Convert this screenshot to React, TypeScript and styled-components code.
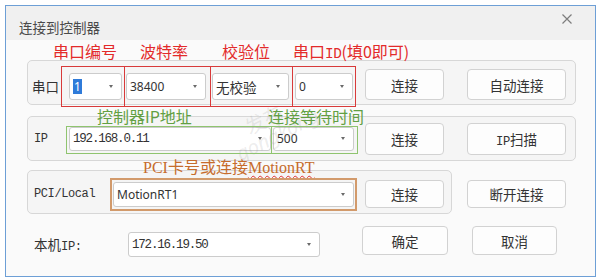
import React from 'react';
import styled, { createGlobalStyle } from 'styled-components';

const CJK = `"Noto Sans CJK SC", "Noto Sans", sans-serif`;
const SONG = `"Liberation Mono", "Noto Sans CJK SC", monospace`;
const SANS = `"Noto Sans", "Noto Sans CJK SC", sans-serif`;

const GlobalStyle = createGlobalStyle`
    html, body {
        margin:0;
        background:#ffffff;
    }
    body {
        font-family:${CJK};
    }
`

type Font = 'cjk' | 'song' | 'sans';
const fontOf = (f?: Font) => (f === 'song' ? SONG : f === 'sans' ? SANS : CJK);

const App = () => {
    return (
        <>
            <GlobalStyle />
            <Window>
                <TitleBar>
                    <Title>连接到控制器</Title>
                    <Close width="10" height="10" viewBox="0 0 10 10">
                        <path d="M0.5 0.5 L9.5 9.5 M9.5 0.5 L0.5 9.5" stroke="#7d7d7d" strokeWidth="1.2" />
                    </Close>
                </TitleBar>
                <Body>
                    <Group $w={549} $h={45} $align="flex-end" $pb={4}>
                        <RowLabel $w={27} $h={27} $ml={4}>串口</RowLabel>
                        <Combo $w={53} $h={27} $ml={10}>
                            <Selected>1</Selected>
                            <Arrow />
                        </Combo>
                        <Combo $w={80} $h={27} $ml={4} $font="sans">38400<Arrow /></Combo>
                        <Combo $w={77} $h={27} $ml={6}>无校验<Arrow /></Combo>
                        <Combo $w={58} $h={27} $ml={6} $font="sans">0<Arrow /></Combo>
                        <Button $w={79} $h={31} $ml={12}>连接</Button>
                        <Button $w={99} $h={31} $ml={23}>自动连接</Button>
                    </Group>

                    <Group $w={549} $h={45} $mt={11}>
                        <RowLabel $w={35} $h={24} $ml={6} $font="song">IP</RowLabel>
                        <Combo $w={202} $h={24} $font="song">192.168.0.11<Arrow /></Combo>
                        <Combo $w={81} $h={24} $ml={2} $font="sans">500<Arrow /></Combo>
                        <Button $w={79} $h={32} $ml={11}>连接</Button>
                        <Button $w={99} $h={32} $ml={23}><Song>IP</Song>扫描</Button>
                    </Group>

                    <Row $mt={9}>
                        <Group $w={425} $h={44} $pt={4}>
                            <RowLabel $w={79} $h={25} $ml={6} $font="song">PCI/Local</RowLabel>
                            <Combo $w={241} $h={25} $font="sans">MotionRT1<Arrow /></Combo>
                            <Button $w={79} $h={28} $ml={11}>连接</Button>
                        </Group>
                        <Button $w={99} $h={28} $ml={15} $mt={10}>断开连接</Button>
                    </Row>

                    <Row $mt={12}>
                        <RowLabel $w={94} $h={25} $ml={7} $mt={6}>本机<Song>IP:</Song></RowLabel>
                        <Combo $w={192} $h={25} $mt={6} $font="song">172.16.19.50<Arrow /></Combo>
                        <Button $w={86} $h={29} $ml={42}>确定</Button>
                        <Button $w={85} $h={29} $ml={24}>取消</Button>
                    </Row>

                    <Watermark>
                        <span>发布</span>
                        <span>gongkong</span>
                    </Watermark>

                    <Note $x={47} $y={1} $c="#e32a2a">串口编号</Note>
                    <Note $x={134} $y={1} $c="#e32a2a">波特率</Note>
                    <Note $x={216} $y={1} $c="#e32a2a">校验位</Note>
                    <Note $x={287} $y={1} $c="#e32a2a">串口<Song>ID</Song>(填0即可)</Note>
                    <Frame $x={55} $y={26} $w={64} $h={41} $c="#d83a3a" />
                    <Frame $x={118} $y={26} $w={87} $h={41} $c="#d83a3a" />
                    <Frame $x={204} $y={26} $w={83} $h={41} $c="#d83a3a" />
                    <Frame $x={286} $y={26} $w={64} $h={41} $c="#d83a3a" />

                    <Note $x={91} $y={66} $c="#62a043">控制器IP地址</Note>
                    <Note $x={262} $y={66} $c="#62a043">连接等待时间</Note>
                    <Frame $x={60} $y={86} $w={206} $h={28} $c="#8fc46f" />
                    <Frame $x={265} $y={86} $w={87} $h={28} $c="#8fc46f" />

                    <Note $x={137} $y={118} $c="#c66c2c" $serif>PCI卡号或连接<Squiggle>MotionRT</Squiggle></Note>
                    <Frame $x={104} $y={138} $w={247} $h={33} $c="#d29a6b" $bw={2} />
                </Body>
            </Window>
        </>
    );
};

const Window = styled.div`
    box-sizing:border-box;
    margin:5px 0 0 5px;
    width:591px;
    height:272px;
    border:1px solid #6d9fd6;
    background:#fafafa;
    display:flex;
    flex-direction:column;
`
const TitleBar = styled.div`
    height:34px;
    flex-shrink:0;
    background:#f0f0f0;
    display:flex;
    justify-content:space-between;
    align-items:flex-start;
    padding:0 23px 0 13px;
`
const Title = styled.div`
    margin-top:13px;
    font-size:13.5px;
    line-height:16px;
    color:#4a4a4a;
`
const Close = styled.svg`
    margin-top:8px;
`
const Body = styled.div`
    position:relative;
    flex:1;
    display:flex;
    flex-direction:column;
    padding:20px 0 0 21px;
`
const Group = styled.div<{ $w: number; $h: number; $mt?: number; $align?: string; $pt?: number; $pb?: number }>`
    box-sizing:border-box;
    width:${p => p.$w}px;
    height:${p => p.$h}px;
    margin-top:${p => p.$mt ?? 0}px;
    padding:${p => p.$pt ?? 0}px 0 ${p => p.$pb ?? 0}px 0;
    border:1px solid #d7d7d7;
    border-radius:5px;
    background:#f5f5f5;
    display:flex;
    align-items:${p => p.$align ?? 'center'};
    flex-shrink:0;
`
const Row = styled.div<{ $mt?: number }>`
    display:flex;
    align-items:flex-start;
    margin-top:${p => p.$mt ?? 0}px;
`
const RowLabel = styled.div<{ $w: number; $h: number; $ml?: number; $mt?: number; $font?: Font }>`
    flex-shrink:0;
    width:${p => p.$w}px;
    height:${p => p.$h}px;
    line-height:${p => p.$h}px;
    margin-left:${p => p.$ml ?? 0}px;
    margin-top:${p => p.$mt ?? 0}px;
    font-family:${p => fontOf(p.$font)};
    font-size:${p => (p.$font === 'song' ? '12px' : '13.5px')};
    letter-spacing:${p => (p.$font === 'song' ? '-0.4px' : '0')};
    color:#333;
    white-space:nowrap;
`
const Song = styled.span`
    font-family:${SONG};
    font-size:0.9em;
    letter-spacing:-0.4px;
`
const Combo = styled.div<{ $w: number; $h: number; $ml?: number; $mt?: number; $font?: Font }>`
    box-sizing:border-box;
    flex-shrink:0;
    width:${p => p.$w}px;
    height:${p => p.$h}px;
    margin-left:${p => p.$ml ?? 0}px;
    margin-top:${p => p.$mt ?? 0}px;
    padding:0 8px 0 3px;
    border:1px solid #cccccc;
    border-radius:3px;
    background:#ffffff;
    display:flex;
    align-items:center;
    justify-content:space-between;
    font-family:${p => fontOf(p.$font)};
    font-size:${p => (p.$font === 'song' ? '12.5px' : p.$font === 'sans' ? '12px' : '13.5px')};
    letter-spacing:${p => (p.$font === 'song' ? '-1.2px' : '0')};
    color:#333;
    white-space:nowrap;
`
const Selected = styled.span`
    font-family:${SANS};
    font-size:12px;
    line-height:15px;
    padding:0 1px;
    background:#2f7bd9;
    color:#ffffff;
`
const Arrow = styled.span`
    width:0;
    height:0;
    border-left:2.5px solid transparent;
    border-right:2.5px solid transparent;
    border-top:3px solid #6a6a6a;
`
const Button = styled.button<{ $w: number; $h: number; $ml?: number; $mt?: number }>`
    box-sizing:border-box;
    flex-shrink:0;
    width:${p => p.$w}px;
    height:${p => p.$h}px;
    margin:${p => p.$mt ?? 0}px 0 0 ${p => p.$ml ?? 0}px;
    padding:0;
    border:1px solid #d2d2d2;
    border-radius:4px;
    background:#fdfdfd;
    font-family:${CJK};
    font-size:13.5px;
    color:#333;
`
const Note = styled.div<{ $x: number; $y: number; $c: string; $serif?: boolean }>`
    position:absolute;
    left:${p => p.$x}px;
    top:${p => p.$y}px;
    font-family:${p => (p.$serif ? `"Liberation Serif", "Noto Sans CJK SC", serif` : CJK)};
    font-size:16px;
    line-height:20px;
    color:${p => p.$c};
    white-space:nowrap;
`
const Squiggle = styled.span`
    text-decoration:underline wavy #e03030;
    text-decoration-thickness:1px;
    text-decoration-skip-ink:none;
    text-underline-offset:2px;
`
const Frame = styled.div<{ $x: number; $y: number; $w: number; $h: number; $c: string; $bw?: number }>`
    position:absolute;
    box-sizing:border-box;
    left:${p => p.$x}px;
    top:${p => p.$y}px;
    width:${p => p.$w}px;
    height:${p => p.$h}px;
    border:${p => p.$bw ?? 1}px solid ${p => p.$c};
    pointer-events:none;
`
const Watermark = styled.div`
    position:absolute;
    left:236px;
    top:84px;
    display:flex;
    flex-direction:column;
    transform:rotate(-27deg);
    transform-origin:left bottom;
    font-family:${SANS};
    font-style:italic;
    font-size:20px;
    line-height:20px;
    color:rgba(120, 120, 120, 0.15);
    pointer-events:none;
    span:first-child {
        font-family:${CJK};
        font-style:normal;
        margin-left:20px;
    }
`

export default App;
